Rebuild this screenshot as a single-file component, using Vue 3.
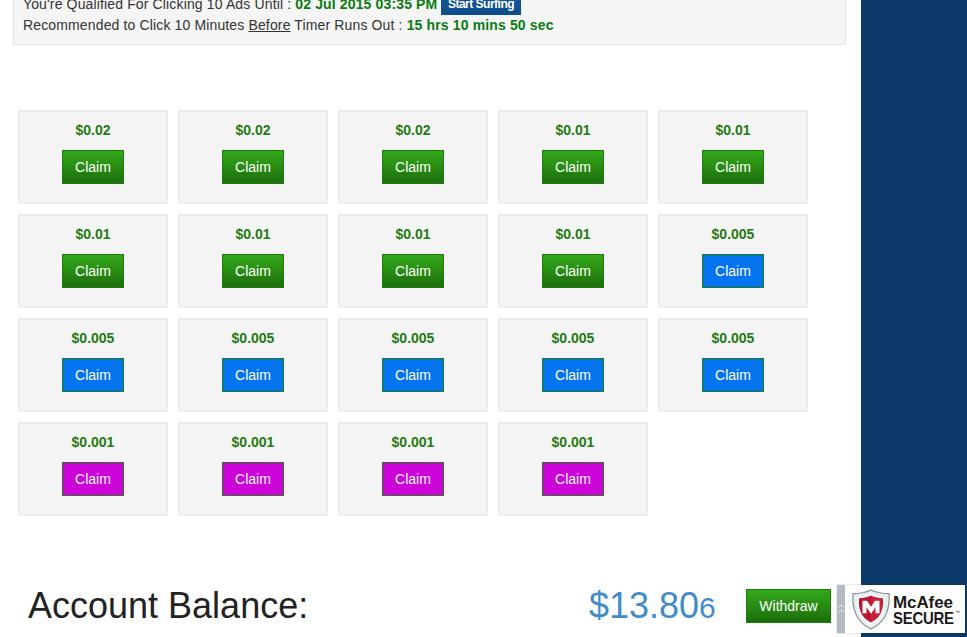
<template>
  <div class="page">
    <div class="main">
      <div class="notice">
        <p class="line first">
          You're Qualified For Clicking 10 Ads Until :
          <b class="green">02 Jul 2015 03:35 PM</b>
          <span class="surf">Start Surfing</span>
        </p>
        <p class="line">
          Recommended to Click 10 Minutes <u>Before</u> Timer Runs Out :
          <b class="green">15 hrs 10 mins 50 sec</b>
        </p>
      </div>

      <div class="cards">
        <div v-for="(item, index) in ads" :key="index" class="card">
          <div class="price">{{ item.price }}</div>
          <div class="claim" :class="item.kind">Claim</div>
        </div>
      </div>

      <div class="balance">
        <div class="balance-label">Account Balance:</div>
        <div class="balance-num">$13.80<span class="small">6</span></div>
        <div class="withdraw">Withdraw</div>
      </div>
    </div>
    <div class="side"></div>

    <div class="badge">
      <div class="handle">
        <svg width="8" height="12" viewBox="0 0 8 12">
          <path d="M1 4.500 4 2l3 2.500M1 9.500 4 7l3 2.500" fill="none" stroke="#e8ebee" stroke-width="1" />
        </svg>
      </div>
      <div class="badge-body">
        <svg class="shield" width="38" height="41" viewBox="0 0 38 44" preserveAspectRatio="none">
          <path d="M19 1 C25 4 31 5 37 5 C38 20 35 35 19 43 C3 35 0 20 1 5 C7 5 13 4 19 1Z" fill="#e9ecee" stroke="#8a9196" stroke-width="1.200" />
          <path d="M19 5 C24 7.500 29 8.500 33 8.500 C34 21 31 32 19 39 C7 32 4 21 5 8.500 C9 8.500 14 7.500 19 5Z" fill="#fff" />
          <path d="M7 10 C11 10 15 9 19 7 L19 36 C9 31 6 21 7 10Z" fill="#b5192f" />
          <path d="M19 7 C23 9 27 10 31 10 C32 21 29 31 19 36Z" fill="#c8213a" />
          <path d="M10.500 26V12.500h4.500L19 19l4-6.500h4.500V26h-4V19.500L19 26.500 14.500 19.500V26Z" fill="#fff" />
        </svg>
        <div class="badge-text">
          <div class="mc">McAfee</div>
          <div class="secure">SECURE</div>
        </div>
        <span class="tm">™</span>
      </div>
    </div>
  </div>
</template>

<script setup>
const ads = [
  { price: "$0.02", kind: "green" },
  { price: "$0.02", kind: "green" },
  { price: "$0.02", kind: "green" },
  { price: "$0.01", kind: "green" },
  { price: "$0.01", kind: "green" },
  { price: "$0.01", kind: "green" },
  { price: "$0.01", kind: "green" },
  { price: "$0.01", kind: "green" },
  { price: "$0.01", kind: "green" },
  { price: "$0.005", kind: "blue" },
  { price: "$0.005", kind: "blue" },
  { price: "$0.005", kind: "blue" },
  { price: "$0.005", kind: "blue" },
  { price: "$0.005", kind: "blue" },
  { price: "$0.005", kind: "blue" },
  { price: "$0.001", kind: "pink" },
  { price: "$0.001", kind: "pink" },
  { price: "$0.001", kind: "pink" },
  { price: "$0.001", kind: "pink" }
];
</script>

<style>
html, body {
  margin: 0;
  overflow: hidden;
}
</style>

<style scoped>
.page {
  position: relative;
  display: flex;
  width: 967px;
  height: 637px;
  overflow: hidden;
  font-family: "Liberation Sans", Arial, sans-serif;
  color: #333;
}
.main {
  width: 861px;
  flex: none;
}
.side {
  flex: 1;
  background: #0c3a68;
}
.notice {
  margin: -20px 15px 0 13px;
  height: 65px;
  box-sizing: border-box;
  padding: 12px 9px 0;
  background: #f5f5f5;
  border: 1px solid #e3e3e3;
  font-size: 14px;
  letter-spacing: 0.14px;
}
.line {
  margin: 0;
  line-height: 21px;
  white-space: nowrap;
}
.first {
  height: 22px;
  line-height: 22px;
}
.green {
  color: #0b7a12;
}
.surf {
  display: inline-block;
  margin-left: 4px;
  padding: 0 6.500px;
  height: 22px;
  line-height: 22px;
  background: linear-gradient(#12589c, #0f4d8b);
  color: #fff;
  font-size: 12px;
  font-weight: bold;
  letter-spacing: -0.5px;
  vertical-align: top;
}
.cards {
  display: flex;
  flex-wrap: wrap;
  align-content: flex-start;
  gap: 10px;
  margin: 65px 0 0 18px;
  width: 800px;
  height: 406px;
}
.card {
  width: 150px;
  height: 94px;
  box-sizing: border-box;
  border: 2px solid #ebebeb;
  background: #f4f4f4;
  display: flex;
  flex-direction: column;
  align-items: center;
  padding-top: 10px;
}
.price {
  font-size: 14px;
  font-weight: bold;
  line-height: 16px;
  color: #257a12;
}
.claim {
  margin-top: 12px;
  width: 62px;
  height: 34px;
  box-sizing: border-box;
  border: 1px solid #1f7a12;
  line-height: 32px;
  text-align: center;
  font-size: 14px;
  color: #fff;
}
.claim.green {
  background: linear-gradient(#34a81a, #1c6f0c);
}
.claim.blue {
  background: #0473f0;
}
.claim.pink {
  background: #cc04da;
}
.balance {
  display: flex;
  align-items: center;
  height: 54px;
  margin-top: 63px;
  padding-left: 28px;
}
.balance-label {
  width: 561px;
  font-size: 36px;
  color: #222;
}
.balance-num {
  width: 157px;
  font-size: 36px;
  color: #428bca;
  white-space: nowrap;
}
.small {
  font-size: 30px;
}
.withdraw {
  width: 85px;
  height: 34px;
  box-sizing: border-box;
  border: 1px solid #1f7a12;
  line-height: 32px;
  text-align: center;
  font-size: 14px;
  color: #fff;
  background: linear-gradient(#34a81a, #1c6f0c);
}
.badge {
  position: absolute;
  left: 837px;
  top: 585px;
  width: 128px;
  height: 48px;
  display: flex;
  background: #fff;
  box-shadow: 0 0 2px rgba(0, 0, 0, 0.25);
}
.handle {
  width: 8px;
  background: #b4bac1;
  display: flex;
  align-items: center;
  justify-content: center;
}
.badge-body {
  position: relative;
  flex: 1;
  display: flex;
  align-items: center;
  padding-left: 7px;
  gap: 3px;
}
.shield {
  flex: none;
}
.badge-text {
  color: #1a1a1a;
  font-family: "Liberation Sans", sans-serif;
  font-weight: 700;
  line-height: 16px;
  padding-top: 3px;
}
.mc {
  font-size: 17px;
  letter-spacing: -0.1px;
}
.secure {
  font-size: 17px;
  letter-spacing: -0.3px;
  transform: scaleX(0.88);
  transform-origin: left center;
}
.tm {
  position: absolute;
  right: 5px;
  top: 24px;
  font-size: 5px;
  font-family: "Liberation Sans", sans-serif;
  color: #1a1a1a;
}
</style>
